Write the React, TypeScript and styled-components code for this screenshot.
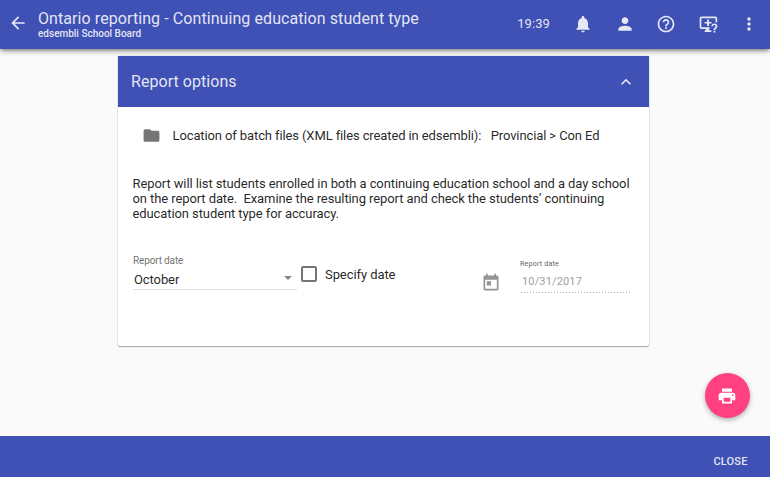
import React from "react";
import styled, { createGlobalStyle } from "styled-components";

const GlobalStyle = createGlobalStyle`
  * { box-sizing: border-box; }
  html, body { margin: 0; height: 100%; }
  body { font-family: Roboto, "Liberation Sans", sans-serif; background: #fafafa; color: rgba(0, 0, 0, 0.87); }
  button { font-family: inherit; }
`;

const INDIGO = "#3f51b5";
const ON_INDIGO = "rgba(255, 255, 255, 0.87)";

const Page = styled.div`
  position: relative;
  display: flex;
  flex-direction: column;
  height: 100vh;
  overflow: hidden;
`;

const Toolbar = styled.header`
  position: relative;
  z-index: 1;
  flex: none;
  height: 49px;
  display: flex;
  align-items: flex-start;
  justify-content: space-between;
  padding: 0 11px 0 7.5px;
  background: ${INDIGO};
  color: ${ON_INDIGO};
  box-shadow: 0 1px 8px rgba(0, 0, 0, 0.2), 0 3px 4px rgba(0, 0, 0, 0.14), 0 3px 3px -2px rgba(0, 0, 0, 0.3);
`;

const ToolbarStart = styled.div`
  display: flex;
`;

const Titles = styled.div`
  padding: 9px 0 0 10.5px;
`;

const Title = styled.h1`
  margin: 0;
  font-size: 16px;
  line-height: 19px;
  font-weight: 400;
  letter-spacing: 0.08px;
  white-space: nowrap;
`;

const Subtitle = styled.div`
  font-size: 10px;
  line-height: 12px;
  font-weight: 500;
`;

const ToolbarEnd = styled.div`
  display: flex;
  align-items: center;
  gap: 21.5px;
  height: 47px;
`;

const Clock = styled.span`
  font-size: 13px;
  font-weight: 400;
  letter-spacing: 0.1px;
  margin-right: 1.5px;
`;

const IconButton = styled.button<{ $height?: number }>`
  display: flex;
  align-items: center;
  justify-content: center;
  width: 20px;
  height: ${(p) => p.$height ?? 20}px;
  padding: 0;
  border: 0;
  background: none;
  color: inherit;
`;

const Icon = styled.svg<{ $size?: number }>`
  display: block;
  flex: none;
  width: ${(p) => p.$size ?? 20}px;
  height: ${(p) => p.$size ?? 20}px;
  fill: currentColor;
`;

const Main = styled.main`
  flex: 1;
  display: flex;
  justify-content: center;
  align-items: flex-start;
  padding: 7px 3px 0 0;
`;

const Card = styled.section`
  width: 531px;
  height: 290px;
  background: #fff;
  border-radius: 2px;
  box-shadow: 0 1px 1px rgba(0, 0, 0, 0.3), 0 0 2px rgba(0, 0, 0, 0.2);
`;

const CardHeader = styled.div`
  height: 51px;
  display: flex;
  align-items: center;
  justify-content: space-between;
  padding: 0 13px;
  background: ${INDIGO};
  color: ${ON_INDIGO};
`;

const CardTitle = styled.h2`
  margin: 0;
  font-size: 16px;
  font-weight: 400;
  letter-spacing: 0.05px;
`;

const CardBody = styled.div`
  padding: 18px 14px 0 14.5px;
  font-size: 13px;
`;

const LocationRow = styled.div`
  display: flex;
  align-items: center;
  height: 21px;
  padding-left: 9.5px;
  letter-spacing: -0.11px;
  white-space: pre;
`;

const LocationLabel = styled.span`
  margin-left: 11.5px;
`;

const LocationPath = styled.span`
  margin-left: 9.5px;
`;

const FolderSlot = styled.span`
  color: #757575;
`;

const Description = styled.p`
  margin: 30px 0 0;
  line-height: 15px;
  letter-spacing: -0.092px;
  white-space: pre;
`;

const Fields = styled.div`
  display: flex;
  align-items: flex-start;
  margin-top: 34px;
  padding-left: 0.5px;
`;

const SelectField = styled.div`
  width: 164px;
`;

const FieldLabel = styled.div`
  font-size: 10px;
  line-height: 12px;
  letter-spacing: -0.15px;
  color: #757575;
`;

const SelectValue = styled.div`
  display: flex;
  align-items: center;
  justify-content: space-between;
  height: 23px;
  padding: 2px 6px 0 1px;
  border-bottom: 1px solid #e0e0e0;
  letter-spacing: -0.1px;
`;

const Caret = styled.span`
  border: 4px solid transparent;
  border-top-color: #858585;
  border-bottom: 0;
  margin: -2px -1px 0 0;
`;

const CheckField = styled.label`
  display: flex;
  align-items: center;
  gap: 8px;
  margin: 11px 0 0 4px;
  width: 180px;
  letter-spacing: -0.08px;
`;

const CheckBox = styled.span`
  width: 16px;
  height: 16px;
  border: 2px solid #757575;
  border-radius: 2px;
`;

const CalendarSlot = styled.span`
  margin: 18px 0 0 -0.5px;
  color: #949494;
`;

const DateField = styled.div`
  width: 110px;
  margin: 4px 0 0 19.5px;
`;

const DateLabel = styled.div`
  font-size: 7px;
  line-height: 10px;
  letter-spacing: 0.25px;
  color: #616161;
`;

const DateValue = styled.div`
  height: 24px;
  padding: 4px 0 0 2px;
  font-size: 11px;
  line-height: 18px;
  letter-spacing: 0.15px;
  color: #9e9e9e;
  background: radial-gradient(circle, #b0b0b0 0.7px, transparent 0.9px) 0 100% / 3px 1px repeat-x;
`;

const PrintButton = styled.button`
  position: absolute;
  right: 20px;
  bottom: 59px;
  width: 45px;
  height: 45px;
  display: flex;
  align-items: center;
  justify-content: center;
  padding: 0 1px 0 0;
  border: 0;
  border-radius: 50%;
  background: #ff4081;
  color: #fff;
  box-shadow: 0 2px 5px rgba(0, 0, 0, 0.3);
`;

const Footer = styled.footer`
  flex: none;
  height: 41px;
  display: flex;
  justify-content: flex-end;
  align-items: center;
  padding: 9px 22.5px 0 0;
  background: ${INDIGO};
`;

const CloseButton = styled.button`
  padding: 0;
  border: 0;
  background: none;
  color: ${ON_INDIGO};
  font-size: 11px;
  font-weight: 500;
  letter-spacing: 0.15px;
`;

const paths = {
  back: "M20 11H7.83l5.59-5.59L12 4l-8 8 8 8 1.41-1.41L7.83 13H20v-2z",
  bell: "M12 22c1.1 0 2-.9 2-2h-4c0 1.1.89 2 2 2zm6-6v-5c0-3.07-1.64-5.64-4.5-6.32V4c0-.83-.67-1.5-1.5-1.5s-1.5.67-1.5 1.5v.68C7.63 5.36 6 7.92 6 11v5l-2 2v1h16v-1l-2-2z",
  person: "M12 12c2.21 0 4-1.79 4-4s-1.79-4-4-4-4 1.79-4 4 1.79 4 4 4zm0 2c-2.67 0-8 1.34-8 4v2h16v-2c0-2.66-5.33-4-8-4z",
  help: "M11 18h2v-2h-2v2zm1-16C6.48 2 2 6.48 2 12s4.48 10 10 10 10-4.48 10-10S17.52 2 12 2zm0 18c-4.41 0-8-3.59-8-8s3.59-8 8-8 8 3.59 8 8-3.59 8-8 8zm0-14c-2.21 0-4 1.79-4 4h2c0-1.1.9-2 2-2s2 .9 2 2c0 2-3 1.75-3 5h2c0-2.25 3-2.5 3-5 0-2.21-1.79-4-4-4z",
  more: "M12 8c1.1 0 2-.9 2-2s-.9-2-2-2-2 .9-2 2 .9 2 2 2zm0 2c-1.1 0-2 .9-2 2s.9 2 2 2 2-.9 2-2-.9-2-2-2zm0 6c-1.1 0-2 .9-2 2s.9 2 2 2 2-.9 2-2-.9-2-2-2z",
  monitor: "M4 3h17c1.1 0 2 .9 2 2v5h-2V5H4v11h10v2h-1v1.500h3v2H8v-2h1.500V18H4c-1.100 0-2-.900-2-2V5c0-1.100.900-2 2-2zM11 6.500h2.200v3h3v2h-3v3H11v-3H8v-2h3zM18.600 20h2.200v2.200h-2.200zM19.600 11.300c-2.100 0-3.600 1.400-3.600 3.400h2.100c0-.900.600-1.500 1.500-1.500s1.500.600 1.500 1.500c0 1.500-2.500 1.700-2.500 4.400h2.200c0-1.800 2.500-2.100 2.500-4.500 0-1.900-1.600-3.300-3.700-3.300z",
  less: "M12 8l-6 6 1.410 1.410L12 10.830l4.590 4.580L18 14z",
  folder: "M10 4H4c-1.100 0-1.990.900-1.990 2L2 18c0 1.100.900 2 2 2h16c1.100 0 2-.900 2-2V8c0-1.100-.900-2-2-2h-8l-2-2z",
  calendar: "M19 3h-1V1h-2v2H8V1H6v2H5c-1.110 0-1.990.900-1.990 2L3 19c0 1.100.890 2 2 2h14c1.100 0 2-.900 2-2V5c0-1.100-.900-2-2-2zm0 16H5V8h14v11zM7 10h5v5H7z",
  print: "M19 8H5c-1.660 0-3 1.340-3 3v6h4v4h12v-4h4v-6c0-1.660-1.340-3-3-3zm-3 11H8v-5h8v5zm3-7c-.550 0-1-.450-1-1s.450-1 1-1 1 .450 1 1-.450 1-1 1zm-1-9H6v4h12V3z",
};

function Glyph({ name, size }: { name: keyof typeof paths; size?: number }) {
  return (
    <Icon viewBox="0 0 24 24" $size={size} aria-hidden="true">
      <path d={paths[name]} />
    </Icon>
  );
}

export default function App() {
  return (
    <Page>
      <GlobalStyle />
      <Toolbar>
        <ToolbarStart>
          <IconButton $height={46} aria-label="Back"><Glyph name="back" /></IconButton>
          <Titles>
            <Title>Ontario reporting - Continuing education student type</Title>
            <Subtitle>edsembli School Board</Subtitle>
          </Titles>
        </ToolbarStart>
        <ToolbarEnd>
          <Clock>19:39</Clock>
          <IconButton aria-label="Notifications"><Glyph name="bell" /></IconButton>
          <IconButton aria-label="Account"><Glyph name="person" /></IconButton>
          <IconButton aria-label="Help"><Glyph name="help" /></IconButton>
          <IconButton aria-label="Remote support"><Glyph name="monitor" /></IconButton>
          <IconButton aria-label="More"><Glyph name="more" /></IconButton>
        </ToolbarEnd>
      </Toolbar>
      <Main>
        <Card>
          <CardHeader>
            <CardTitle>Report options</CardTitle>
            <IconButton aria-label="Collapse"><Glyph name="less" /></IconButton>
          </CardHeader>
          <CardBody>
            <LocationRow>
              <FolderSlot><Glyph name="folder" size={19} /></FolderSlot>
              <LocationLabel>Location of batch files (XML files created in edsembli):</LocationLabel>
              <LocationPath>Provincial &gt; Con Ed</LocationPath>
            </LocationRow>
            <Description>
              {"Report will list students enrolled in both a continuing education school and a day school\non the report date.  Examine the resulting report and check the students’ continuing\neducation student type for accuracy."}
            </Description>
            <Fields>
              <SelectField>
                <FieldLabel>Report date</FieldLabel>
                <SelectValue>October<Caret /></SelectValue>
              </SelectField>
              <CheckField><CheckBox />Specify date</CheckField>
              <CalendarSlot><Glyph name="calendar" /></CalendarSlot>
              <DateField>
                <DateLabel>Report date</DateLabel>
                <DateValue>10/31/2017</DateValue>
              </DateField>
            </Fields>
          </CardBody>
        </Card>
      </Main>
      <Footer><CloseButton>CLOSE</CloseButton></Footer>
      <PrintButton aria-label="Print"><Glyph name="print" /></PrintButton>
    </Page>
  );
}
